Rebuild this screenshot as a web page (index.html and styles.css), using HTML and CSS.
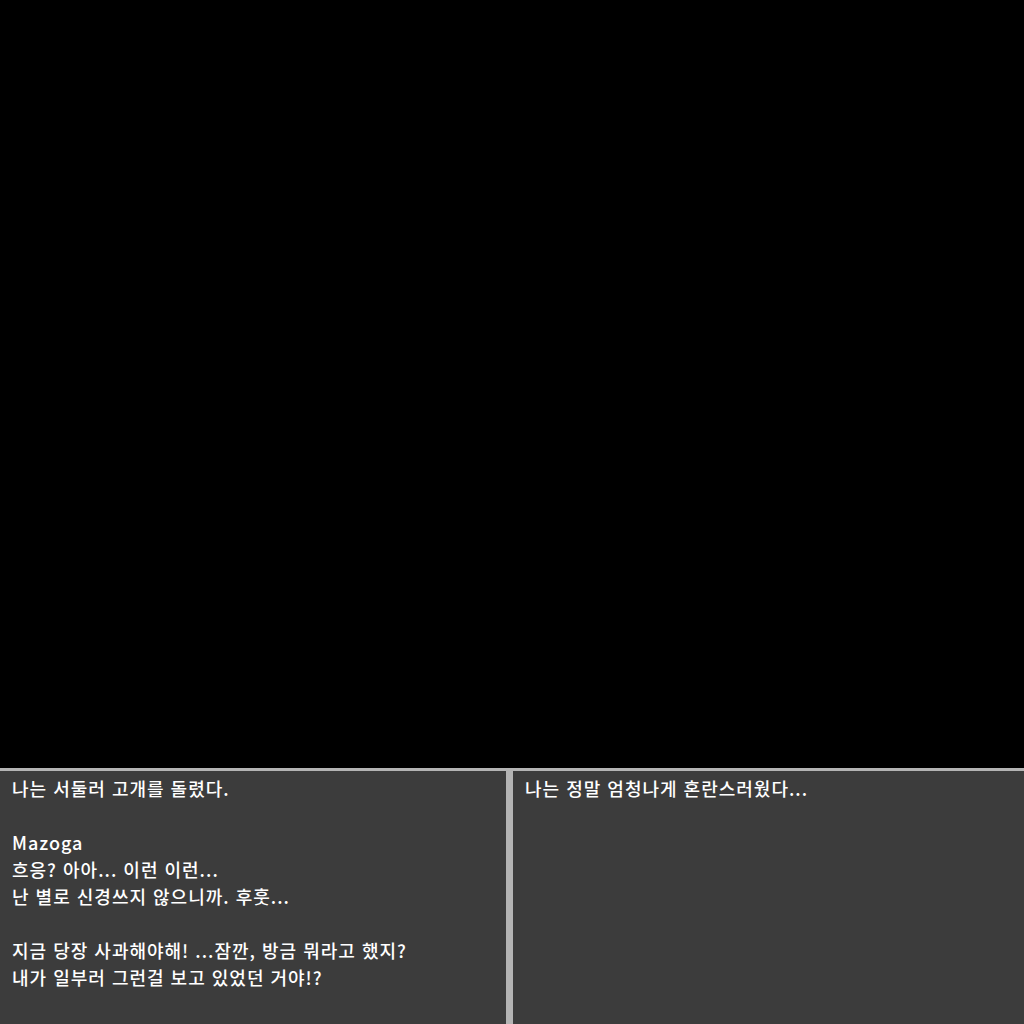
FILE: index.html
```html
<!DOCTYPE html>
<html lang="ko">
<head>
<meta charset="utf-8">
<link rel="stylesheet" href="styles.css">
</head>
<body>
<div class="screen"></div>
<div class="dialog">
  <div class="panel left">
    <p class="line">나는 서둘러 고개를 돌렸다.</p>
    <p class="line blank">&nbsp;</p>
    <p class="line">Mazoga</p>
    <p class="line">흐응? 아아... 이런 이런...</p>
    <p class="line">난 별로 신경쓰지 않으니까. 후훗...</p>
    <p class="line blank">&nbsp;</p>
    <p class="line">지금 당장 사과해야해! ...잠깐, 방금 뭐라고 했지?</p>
    <p class="line">내가 일부러 그런걸 보고 있었던 거야!?</p>
  </div>
  <div class="divider"></div>
  <div class="panel right">
    <p class="line">나는 정말 엄청나게 혼란스러웠다...</p>
  </div>
</div>
</body>
</html>
```
FILE: styles.css
```css
html, body {
  margin: 0;
  padding: 0;
  width: 1024px;
  height: 1024px;
  background: #000;
  overflow: hidden;
}
body {
  display: flex;
  flex-direction: column;
  font-family: "Noto Sans CJK KR", "Noto Sans", sans-serif;
}
.screen {
  height: 768px;
  background: #000;
}
.dialog {
  flex: 1;
  display: flex;
  border-top: 3px solid #b4b4b4;
  background: #3c3c3c;
}
.panel {
  padding: 4px 12px 0 12px;
  color: #fff;
  font-size: 18px;
  letter-spacing: 1px;
  font-weight: 500;
}
.left {
  width: 506px;
  box-sizing: border-box;
}
.right {
  flex: 1;
}
.divider {
  width: 7px;
  background: #b4b4b4;
}
.line {
  margin: 0;
  height: 27px;
  line-height: 27px;
  white-space: pre;
}
```
